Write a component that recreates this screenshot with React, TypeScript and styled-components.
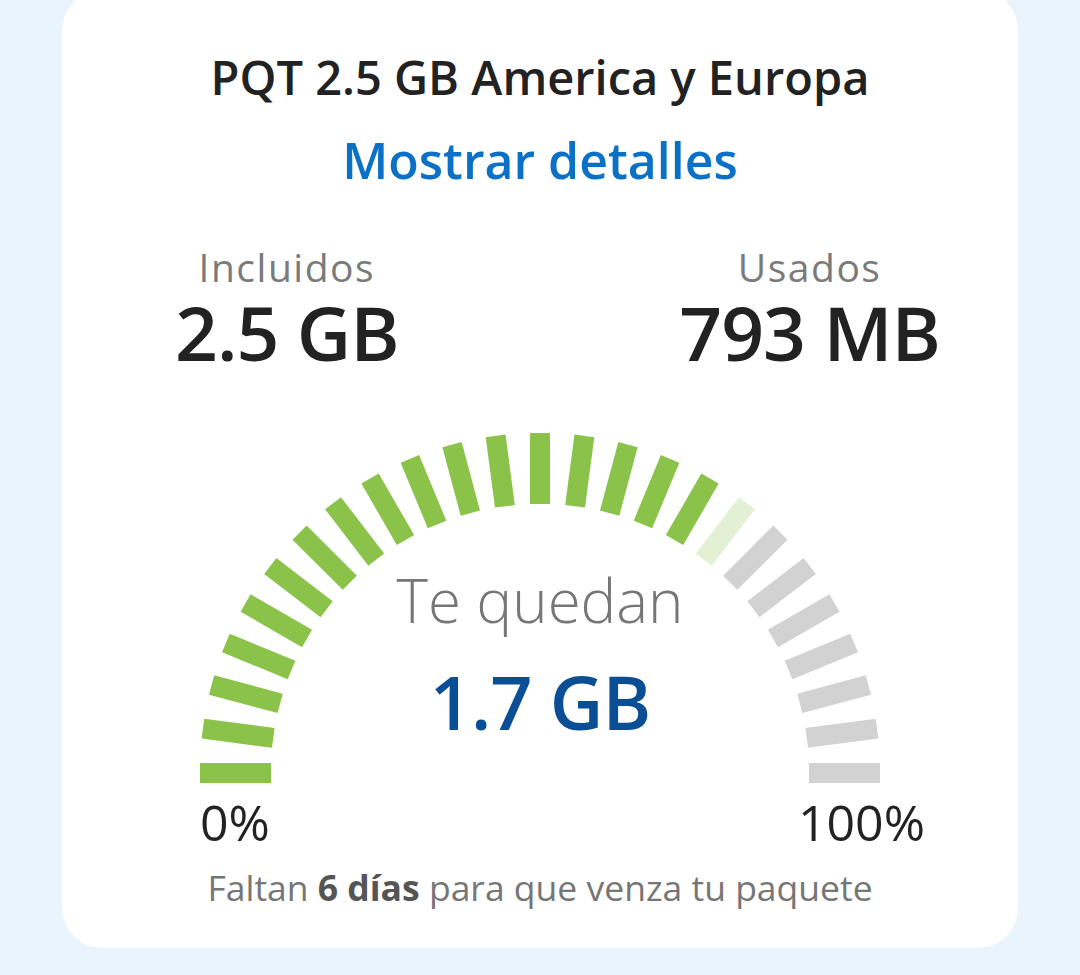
import styled, { createGlobalStyle } from 'styled-components'

const GlobalStyle = createGlobalStyle`
  html, body {
    margin: 0;
    padding: 0;
    background: #e9f4fd;
    font-family: "Open Sans", "Noto Sans", sans-serif;
  }
`

const Page = styled.div`
  width: 1080px;
  height: 975px;
  overflow: hidden;
  box-sizing: border-box;
  padding: 0 62px;
`

const Card = styled.div`
  margin-top: -10px;
  height: 958px;
  box-sizing: border-box;
  background: #ffffff;
  border-radius: 40px;
  padding-top: 59px;
  display: flex;
  flex-direction: column;
  align-items: center;
`

const Title = styled.h1`
  margin: 0;
  font-size: 47px;
  line-height: 56px;
  font-weight: 550;
  color: #222222;
`

const DetailsLink = styled.a`
  margin-top: 25px;
  font-size: 50px;
  line-height: 60px;
  font-weight: 600;
  color: #0b71c6;
  text-decoration: none;
  cursor: pointer;
`

const StatsRow = styled.div`
  align-self: stretch;
  margin-top: 54px;
  padding: 0 78px 0 113px;
  display: flex;
  justify-content: space-between;
`

const Stat = styled.div`
  display: flex;
  flex-direction: column;
  align-items: center;
`

const StatLabel = styled.span`
  font-size: 39px;
  line-height: 46px;
  letter-spacing: 1.5px;
  color: #7a7a7a;
`

const StatValue = styled.span`
  font-size: 75px;
  line-height: 84px;
  font-weight: 550;
  letter-spacing: -1px;
  color: #222222;
`

const GaugeWrap = styled.div`
  position: relative;
  width: 680px;
  height: 350px;
  margin-top: 59px;
  padding-top: 133px;
  box-sizing: border-box;
  display: flex;
  flex-direction: column;
  align-items: center;
`

const GaugeSvg = styled.svg`
  position: absolute;
  inset: 0;
`

const Remaining = styled.span`
  position: relative;
  font-size: 60px;
  line-height: 68px;
  font-weight: 350;
  color: #767676;
`

const RemainingValue = styled.span`
  position: relative;
  margin-top: 28px;
  font-size: 74px;
  line-height: 80px;
  font-weight: 600;
  letter-spacing: -1px;
  color: #0a4e95;
`

const Scale = styled.div`
  width: 725px;
  margin-top: 11px;
  margin-left: 45px;
  display: flex;
  justify-content: space-between;
`

const ScaleLabel = styled.span`
  font-size: 50px;
  line-height: 56px;
  color: #222222;
`

const Footer = styled.p`
  margin: 15px 0 0;
  font-size: 35.5px;
  line-height: 44px;
  color: #767676;

  strong {
    font-weight: 700;
    color: #555555;
  }
`

const SEGMENTS = 25
const FILLED = 17

function segmentColor(i: number) {
  if (i < FILLED) return '#8bc34a'
  if (i === FILLED) return '#e2f0d4'
  return '#d2d2d2'
}

function Gauge() {
  const cx = 340
  const cy = 340
  const rIn = 269
  const rOut = 340
  return (
    <GaugeSvg width="680" height="350" viewBox="0 0 680 350">
      {Array.from({ length: SEGMENTS }, (_, i) => {
        const a = ((180 - i * 7.5) * Math.PI) / 180
        const cos = Math.cos(a)
        const sin = Math.sin(a)
        return (
          <line
            key={i}
            x1={cx + rIn * cos}
            y1={cy - rIn * sin}
            x2={cx + rOut * cos}
            y2={cy - rOut * sin}
            stroke={segmentColor(i)}
            strokeWidth={20}
          />
        )
      })}
    </GaugeSvg>
  )
}

export default function App() {
  return (
    <Page>
      <GlobalStyle />
      <Card>
        <Title>PQT 2.5 GB America y Europa</Title>
        <DetailsLink>Mostrar detalles</DetailsLink>

        <StatsRow>
          <Stat>
            <StatLabel>Incluidos</StatLabel>
            <StatValue>2.5 GB</StatValue>
          </Stat>
          <Stat>
            <StatLabel>Usados</StatLabel>
            <StatValue>793 MB</StatValue>
          </Stat>
        </StatsRow>

        <GaugeWrap>
          <Gauge />
          <Remaining>Te quedan</Remaining>
          <RemainingValue>1.7 GB</RemainingValue>
        </GaugeWrap>

        <Scale>
          <ScaleLabel>0%</ScaleLabel>
          <ScaleLabel>100%</ScaleLabel>
        </Scale>

        <Footer>
          Faltan <strong>6 días</strong> para que venza tu paquete
        </Footer>
      </Card>
    </Page>
  )
}
